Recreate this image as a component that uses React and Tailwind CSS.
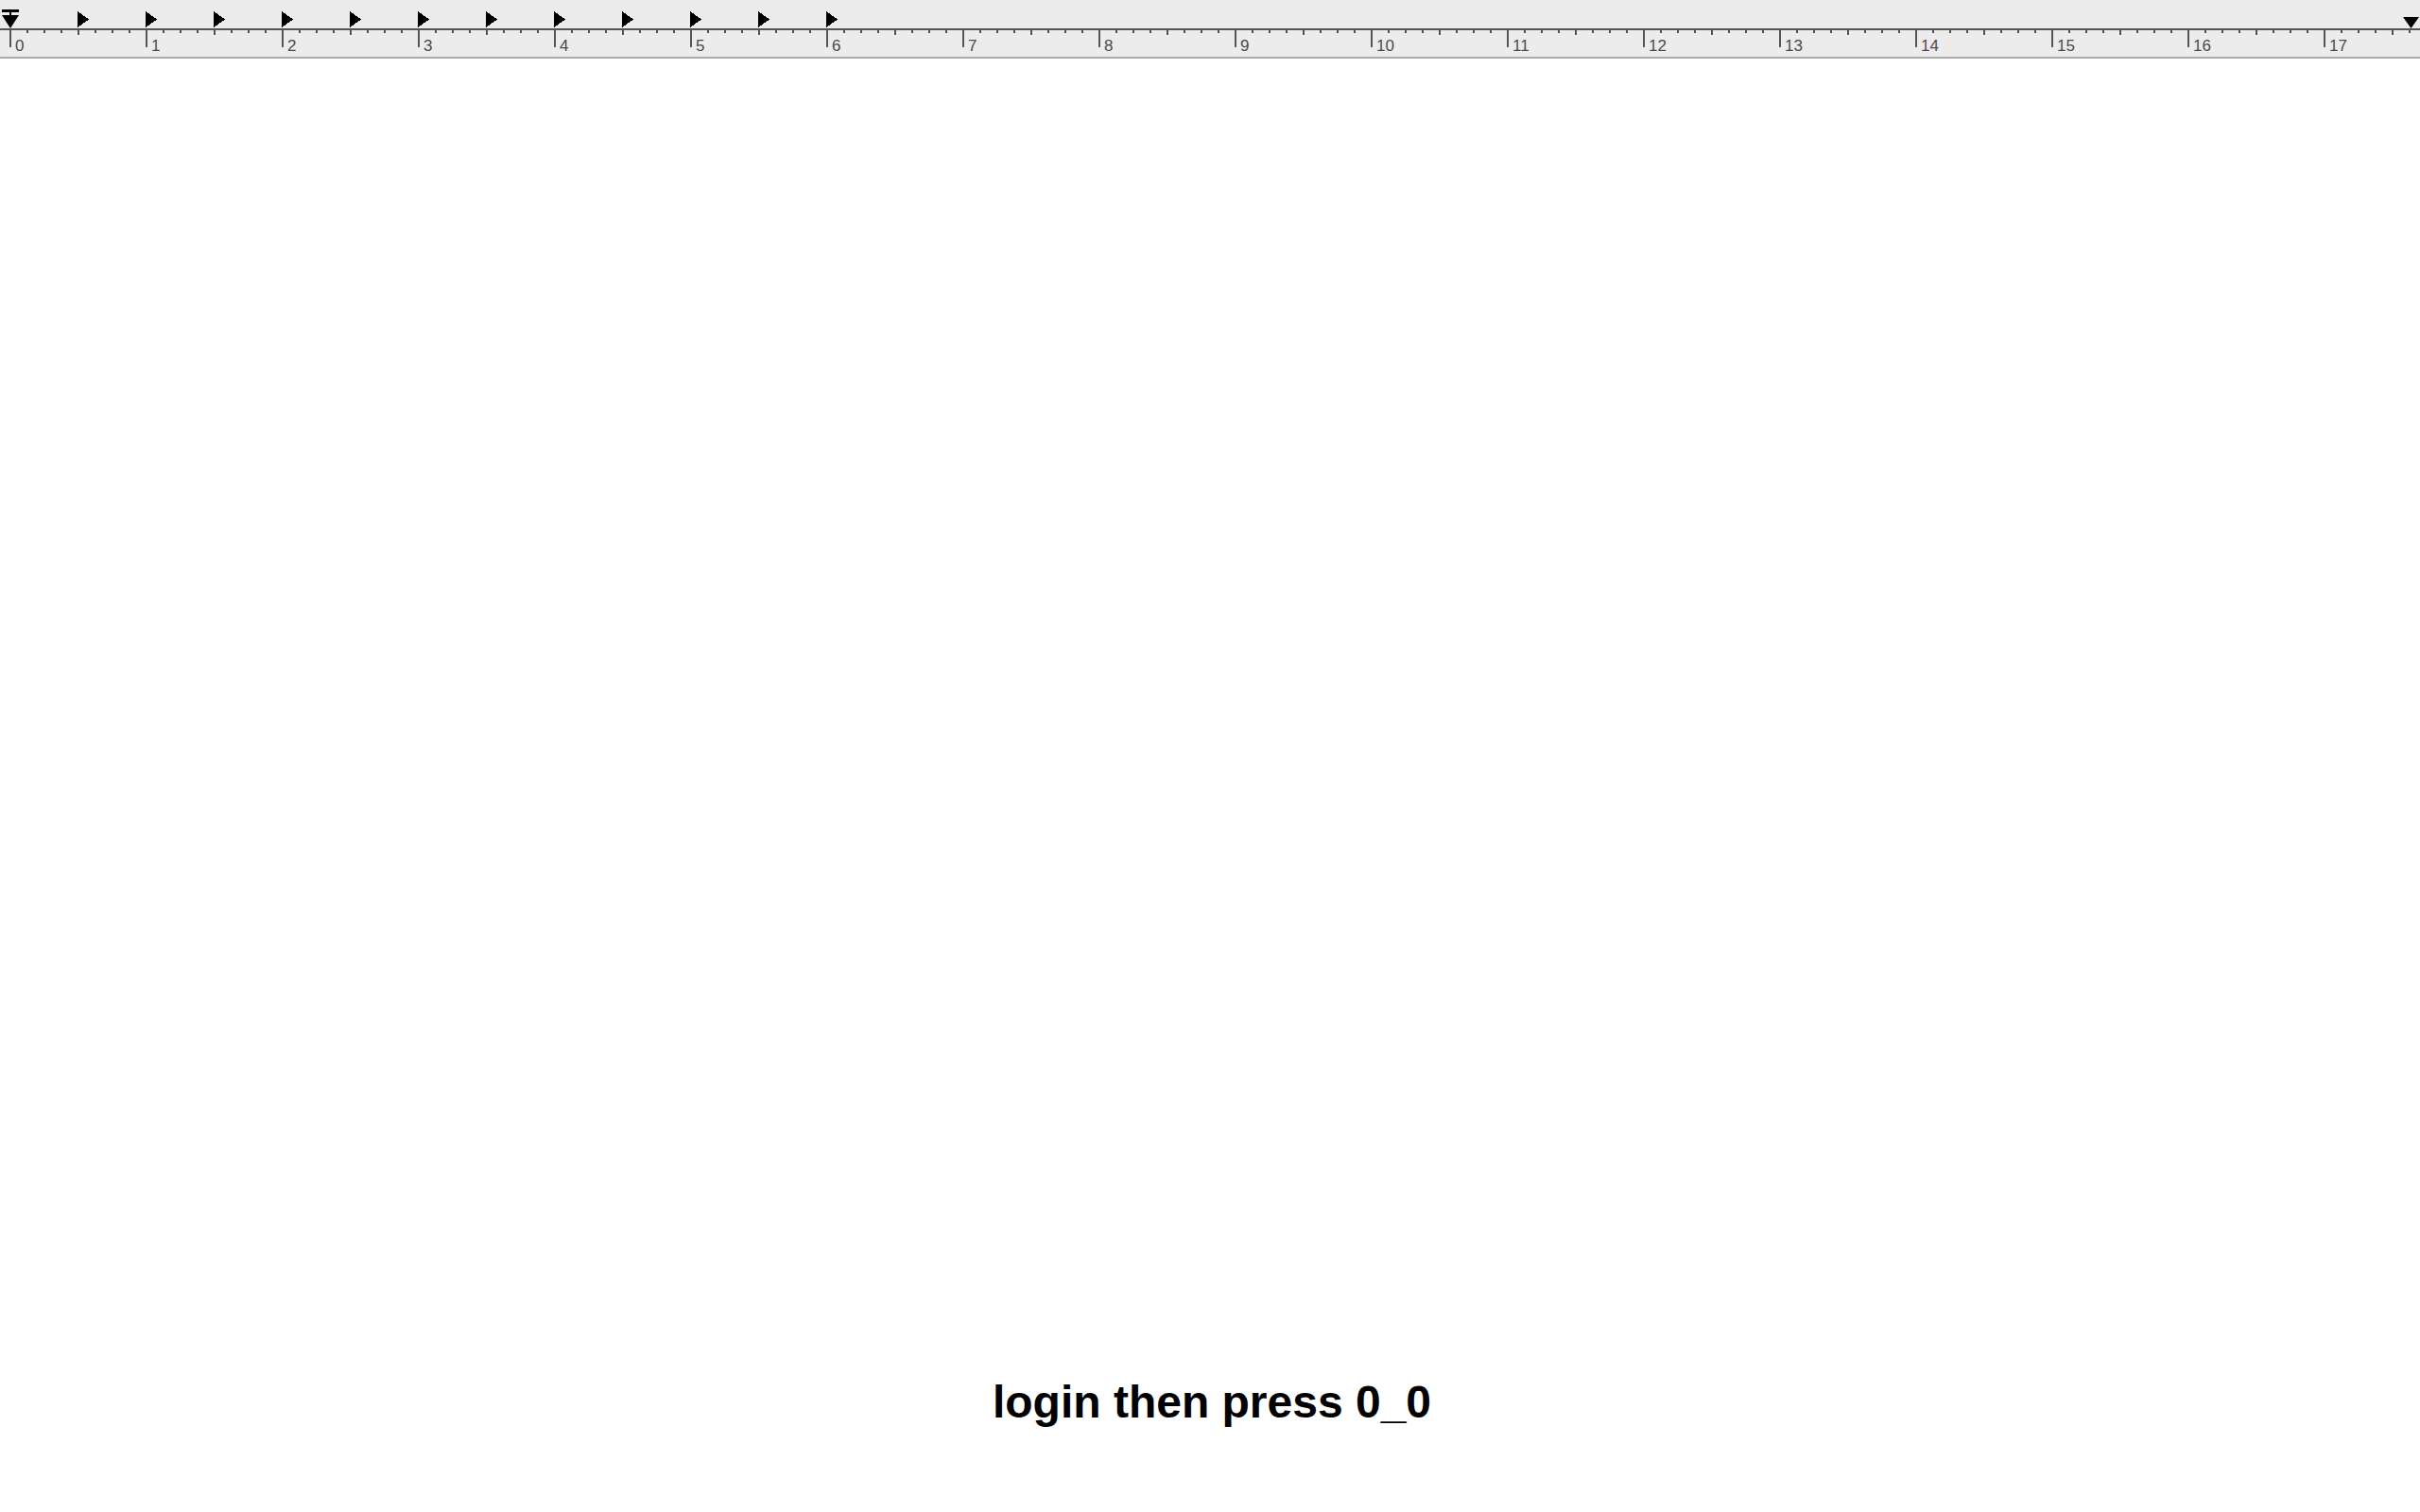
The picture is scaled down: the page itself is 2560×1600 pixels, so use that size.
import React from "react";

const UNIT = 144;
const ORIGIN = 10;

function Ruler() {
  const ticks = [];
  for (let k = 0; k * 18 + ORIGIN < 2560; k++) {
    const x = ORIGIN + k * 18;
    if (k % 8 === 0) {
      ticks.push(<rect key={"t" + k} x={x} y={30} width={2} height={20} fill="#555555" />);
    } else if (k % 4 === 0) {
      ticks.push(<rect key={"t" + k} x={x} y={30} width={2} height={7} fill="#555555" />);
    } else {
      ticks.push(<rect key={"t" + k} x={x} y={30} width={2} height={5} fill="#555555" />);
    }
  }
  const labels = [];
  for (let n = 0; n <= 17; n++) {
    labels.push(
      <text
        key={"l" + n}
        x={ORIGIN + n * UNIT + 6}
        y={53.5}
        fontSize={17}
        fill="#4a4a4a"
        fontFamily="'Liberation Sans', Arial, sans-serif"
      >
        {n}
      </text>
    );
  }
  const tabs = [];
  for (let k = 1; k <= 12; k++) {
    const tx = ORIGIN + k * 72;
    tabs.push(
      <polygon key={"tab" + k} points={`${tx},12 ${tx},29 ${tx + 12},20.5`} fill="#000000" />
    );
  }
  return (
    <div className="h-[62px] w-full bg-[#ececec] border-b-2 border-[#a9a9a9]">
      <svg width="2560" height="60" viewBox="0 0 2560 60" className="block" shapeRendering="crispEdges">
        <rect x={0} y={30} width={2560} height={2} fill="#555555" />
        {ticks}
        {labels}
        {tabs}
        <rect x={2} y={10} width={18} height={3} fill="#000000" />
        <rect x={10} y={13} width={2} height={4} fill="#000000" />
        <polygon points="2,16 20,16 11,30" fill="#000000" shapeRendering="geometricPrecision" />
        <polygon points="2542,18 2559,18 2550.5,30" fill="#000000" shapeRendering="geometricPrecision" />
      </svg>
    </div>
  );
}

export default function App() {
  return (
    <div className="w-[2560px] h-[1600px] bg-white overflow-hidden flex flex-col">
      <Ruler />
      <div className="pt-[1398px] pl-[4px] text-center">
        <span className="text-[48px] leading-none font-bold text-black font-['Liberation_Sans',Arial,sans-serif]">
          login then press 0_0
        </span>
      </div>
    </div>
  );
}
